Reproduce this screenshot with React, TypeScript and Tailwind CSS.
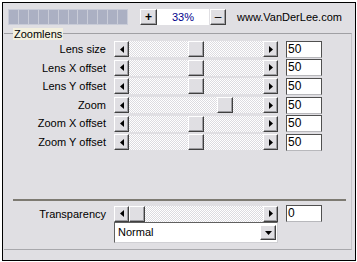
import React from 'react';

const FONT = { fontFamily: '"Liberation Sans", Arial, sans-serif' };

const raised =
  'border border-t-white border-l-white border-b-[#404040] border-r-[#404040] shadow-[inset_-1px_-1px_0_#9d9da1] bg-[#e0dfe3]';
const sunken =
  'border border-t-[#505050] border-l-[#505050] border-b-[#b8b8bc] border-r-[#505050] bg-white';
const track =
  'bg-[repeating-conic-gradient(#ffffff_0%_25%,#dcdbe0_0%_50%)] bg-[length:2px_2px]';

const ArrowLeft = () => (
  <svg width="4" height="7" viewBox="0 0 4 7">
    <path d="M4 0 L0 3.5 L4 7 Z" fill="#000" />
  </svg>
);

const ArrowRight = () => (
  <svg width="4" height="7" viewBox="0 0 4 7">
    <path d="M0 0 L4 3.5 L0 7 Z" fill="#000" />
  </svg>
);

const ArrowDown = () => (
  <svg width="7" height="4" viewBox="0 0 7 4">
    <path d="M0 0 L7 0 L3.5 4 Z" fill="#000" />
  </svg>
);

// one trackbar row: label, <, track with thumb, >, value box
const SliderRow = ({ label, pos, value }: { label: string; pos: number; value: string }) => (
  <div className="flex items-center h-[18.6px]">
    <div className="w-[103px] text-right text-[11px] text-black pr-[1px]">{label}</div>
    <div className="ml-[7px] flex h-[16px]">
      <div className={`${raised} w-[15px] h-[16px] flex items-center justify-center`}>
        <ArrowLeft />
      </div>
      <div className={`${track} w-[134px] h-[16px] flex`}>
        <div className={`${raised} w-[16px] h-[16px]`} style={{ marginLeft: pos }} />
      </div>
      <div className={`${raised} w-[15px] h-[16px] flex items-center justify-center`}>
        <ArrowRight />
      </div>
    </div>
    <div className={`${sunken} ml-[8px] w-[36px] h-[17px] text-[12px] leading-[15px] pl-[1px] text-black`}>
      {value}
    </div>
  </div>
);

const rows = [
  { label: 'Lens size', pos: 59 },
  { label: 'Lens X offset', pos: 59 },
  { label: 'Lens Y offset', pos: 59 },
  { label: 'Zoom', pos: 88 },
  { label: 'Zoom X offset', pos: 59 },
  { label: 'Zoom Y offset', pos: 59 },
];

export default function App() {
  return (
    <div className="w-[357px] h-[262px] bg-white p-[2px]" style={FONT}>
      <div className="w-[354px] h-[259px] border border-black bg-[#e0dfe3] flex flex-col">
        {/* top bar */}
        <div className="h-[30px] flex items-start pt-[6px] pl-[5px]">
          <div className="w-[120px] h-[16px] flex gap-[1px] bg-[#c9ccd8] px-[1px] py-[1px]">
            {Array.from({ length: 12 }).map((_, i) => (
              <div key={i} className="flex-1 bg-[#abb0c3]" />
            ))}
          </div>
          <div className={`${raised} ml-[12px] w-[17px] h-[16px] flex items-center justify-center text-[12px] font-bold leading-none`}>
            +
          </div>
          <div className="w-[52px] h-[16px] bg-white text-[11px] leading-[16px] text-center text-[#00008b]">
            33%
          </div>
          <div className={`${raised} ml-[1px] w-[16px] h-[16px] flex items-center justify-center text-[12px] leading-none`}>
            –
          </div>
          <div className="ml-[11px] text-[11px] leading-[16px] text-black">www.VanDerLee.com</div>
        </div>

        {/* zoomlens panel */}
        <div className="relative ml-[1px] w-[348px] h-[217px] border-t border-r border-b border-t-[#a0a0a4] border-r-[#c4c4c8] border-b-[#a8a8ac] flex flex-col">
          <div className="absolute left-[9px] top-[-6px] bg-[#f3f0df] px-[1px] text-[11px] leading-[12px] text-black">
            Zoomlens
          </div>
          <div className="pt-[6px] flex flex-col">
            {rows.map((r) => (
              <SliderRow key={r.label} label={r.label} pos={r.pos} value="50" />
            ))}
          </div>
          <div className="mt-[47px] ml-[9px] w-[333px] h-[2px] bg-[#7d7a72]" />
          <div className="mt-[4px]">
            <SliderRow label="Transparency" pos={0} value="0" />
          </div>
          <div className="ml-[110px] mt-[-1px] w-[164px] h-[21px] border border-t-[#606060] border-l-[#606060] border-b-[#d0d0d4] border-r-[#d0d0d4] bg-white flex items-center">
            <div className="flex-1 pl-[3px] text-[11px] text-black">Normal</div>
            <div className={`${raised} w-[16px] h-[15px] mr-[1px] flex items-center justify-center`}>
              <ArrowDown />
            </div>
          </div>
        </div>
      </div>
    </div>
  );
}
